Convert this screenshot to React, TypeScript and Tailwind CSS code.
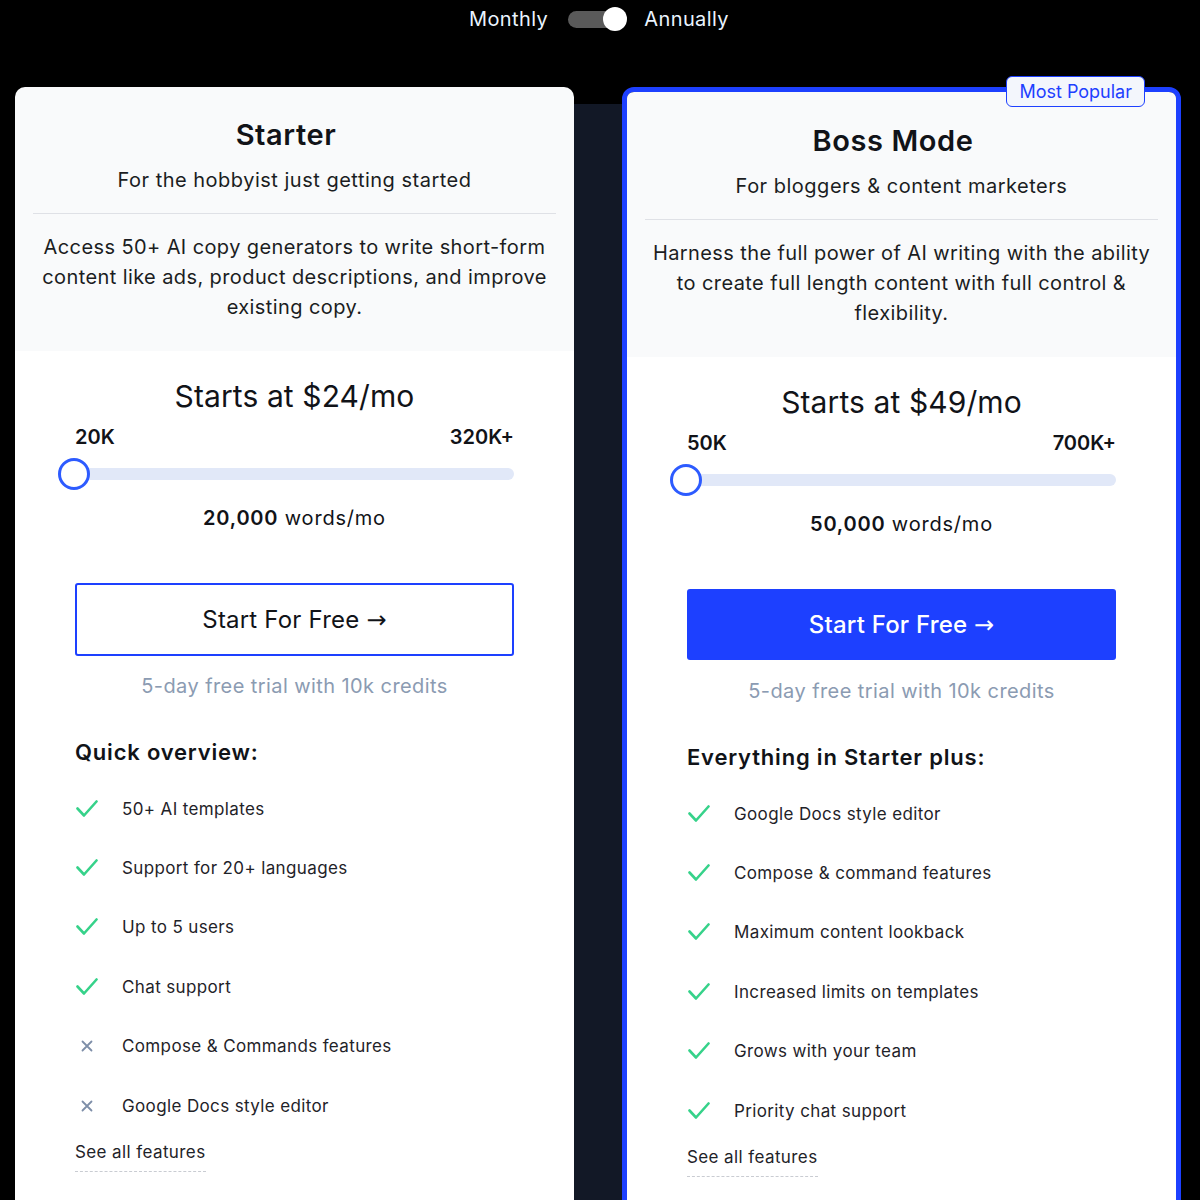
import React from "react";

function Check() {
  return (
    <svg width="22" height="18" viewBox="0 0 22 18" fill="none" className="ml-[1px]">
      <polyline points="1.5,8.5 8,15.5 20.5,1.5" stroke="#36d28a" strokeWidth="2.6" strokeLinecap="round" strokeLinejoin="round" />
    </svg>
  );
}

function Cross() {
  return (
    <svg width="12" height="12" viewBox="0 0 12 12" fill="none" className="ml-[6px]">
      <path d="M1.5 1.5 L10.5 10.5 M10.5 1.5 L1.5 10.5" stroke="#7d8ea8" strokeWidth="1.8" strokeLinecap="round" />
    </svg>
  );
}

type Feature = { text: string; ok: boolean };

function Card(props: {
  title: string;
  subtitle: string;
  desc: React.ReactNode;
  price: string;
  min: string;
  max: string;
  words: string;
  primary: boolean;
  heading: string;
  features: Feature[];
}) {
  const { title, subtitle, desc, price, min, max, words, primary, heading, features } = props;
  return (
    <div className="flex flex-col">
      <div className="bg-[#f9fafb] px-[18px] pt-[30px] pb-[29px] flex flex-col items-center">
        <div className="mr-[17px] text-[29px] leading-[36px] font-semibold text-[#111318] tracking-[0.6px]">{title}</div>
        <div className="mt-[13px] text-[20px] leading-[28px] text-[#1b1d22] tracking-[0.5px]">{subtitle}</div>
        <div className="mt-[19px] h-px w-full bg-[#dfe1e6]" />
        <div className="mt-[18px] text-[20px] leading-[30px] text-[#1b1d22] text-center px-[4px] tracking-[0.4px]">{desc}</div>
      </div>
      <div className="bg-white px-[60px] pt-[27px] pb-[40px] flex flex-col">
        <div className="text-[30px] leading-[36px] text-center text-[#111318] tracking-[0.1px]">{price}</div>
        <div className="mt-[9px] flex justify-between text-[20px] leading-[28px] font-semibold text-[#111318]">
          <span>{min}</span>
          <span>{max}</span>
        </div>
        <div className="mt-[8px] h-[30px] flex items-center">
          <div className="relative w-full h-[12px] rounded-full bg-[#e1e8f8]">
            <div className="absolute left-[-17px] top-1/2 -translate-y-1/2 w-[32px] h-[32px] rounded-full border-[3px] border-[#2d5bff] bg-white" />
          </div>
        </div>
        <div className="mt-[15px] text-center text-[20px] leading-[28px] text-[#111318] tracking-[0.8px]">
          <span className="font-semibold">{words}</span> words/mo
        </div>
        <button
          className={
            primary
              ? "mt-[51px] h-[71px] rounded-[3px] bg-[#1d40ff] text-white text-[24px] font-medium tracking-[0.2px]"
              : "mt-[51px] h-[73px] rounded-[3px] border-2 border-[#1d40ff] bg-white text-[#111318] text-[24px] tracking-[0.2px]"
          }
        >
          Start For Free <span className="font-['DejaVu_Sans',sans-serif] font-normal">→</span>
        </button>
        <div className={(primary ? "mt-[17px]" : "mt-[16px]") + " text-center text-[20px] leading-[28px] text-[#8b9bb2] tracking-[0.42px]"}>
          5-day free trial with 10k credits
        </div>
        <div className="mt-[37px] text-[22px] leading-[30px] font-semibold text-[#111318] tracking-[0.8px]">{heading}</div>
        <div className="mt-[12px] flex flex-col">
          {features.map((f) => (
            <div key={f.text} className="h-[59.4px] flex items-center gap-[23px]">
              <div className="w-[24px] flex items-center">{f.ok ? <Check /> : <Cross />}</div>
              <span className="text-[17px] leading-[24px] text-[#1f2329] tracking-[0.37px]">{f.text}</span>
            </div>
          ))}
        </div>
        <div className="mt-[5px]">
          <span className="inline-block text-[17px] leading-[24px] text-[#1f2329] tracking-[0.4px] pb-[7px] border-b border-dashed border-[#c9ccd2]">
            See all features
          </span>
        </div>
      </div>
    </div>
  );
}

export default function App() {
  return (
    <div className="h-[1200px] overflow-hidden bg-black font-['Inter',sans-serif]">
      <div className="h-[38px] flex items-center justify-center">
        <span className="text-[20px] text-[#eaf4ff] tracking-[0.4px] ml-[-2px]">Monthly</span>
        <div className="ml-[20px] relative w-[53px] h-[17px] rounded-full bg-[#5a5a5a]">
          <div className="absolute right-[-6px] top-1/2 -translate-y-1/2 w-[24px] h-[24px] rounded-full bg-white" />
        </div>
        <span className="ml-[23px] text-[20px] text-[#eaf4ff] tracking-[0.4px]">Annually</span>
      </div>
      <div className="mt-[49px] pl-[15px] grid grid-cols-[559px_48px_559px] items-start">
        <div className="rounded-t-[10px] overflow-hidden">
          <Card
            title="Starter"
            subtitle="For the hobbyist just getting started"
            desc={<>Access 50+ AI copy generators to write short-form content like ads, product descriptions, and improve existing copy.</>}
            price="Starts at $24/mo"
            min="20K"
            max="320K+"
            words="20,000"
            primary={false}
            heading="Quick overview:"
            features={[
              { text: "50+ AI templates", ok: true },
              { text: "Support for 20+ languages", ok: true },
              { text: "Up to 5 users", ok: true },
              { text: "Chat support", ok: true },
              { text: "Compose & Commands features", ok: false },
              { text: "Google Docs style editor", ok: false },
            ]}
          />
        </div>
        <div className="mt-[17px] h-[1200px] bg-[#121826]" />
        <div className="relative rounded-[12px] border-[5px] border-[#1d40ff]">
          <div className="rounded-t-[7px] overflow-hidden pt-[1px] bg-[#f9fafb]">
            <Card
              title="Boss Mode"
              subtitle="For bloggers & content marketers"
              desc={<>Harness the full power of AI writing with the ability to create full length content with full control &amp; flexibility.</>}
              price="Starts at $49/mo"
              min="50K"
              max="700K+"
              words="50,000"
              primary={true}
              heading="Everything in Starter plus:"
              features={[
                { text: "Google Docs style editor", ok: true },
                { text: "Compose & command features", ok: true },
                { text: "Maximum content lookback", ok: true },
                { text: "Increased limits on templates", ok: true },
                { text: "Grows with your team", ok: true },
                { text: "Priority chat support", ok: true },
              ]}
            />
          </div>
          <div className="absolute top-[-16px] right-[31px] h-[31px] px-[12px] flex items-center rounded-[6px] border-[1.5px] border-[#1d40ff] bg-[#f3f6fc] text-[18px] text-[#1d40ff]">
            Most Popular
          </div>
        </div>
      </div>
    </div>
  );
}
